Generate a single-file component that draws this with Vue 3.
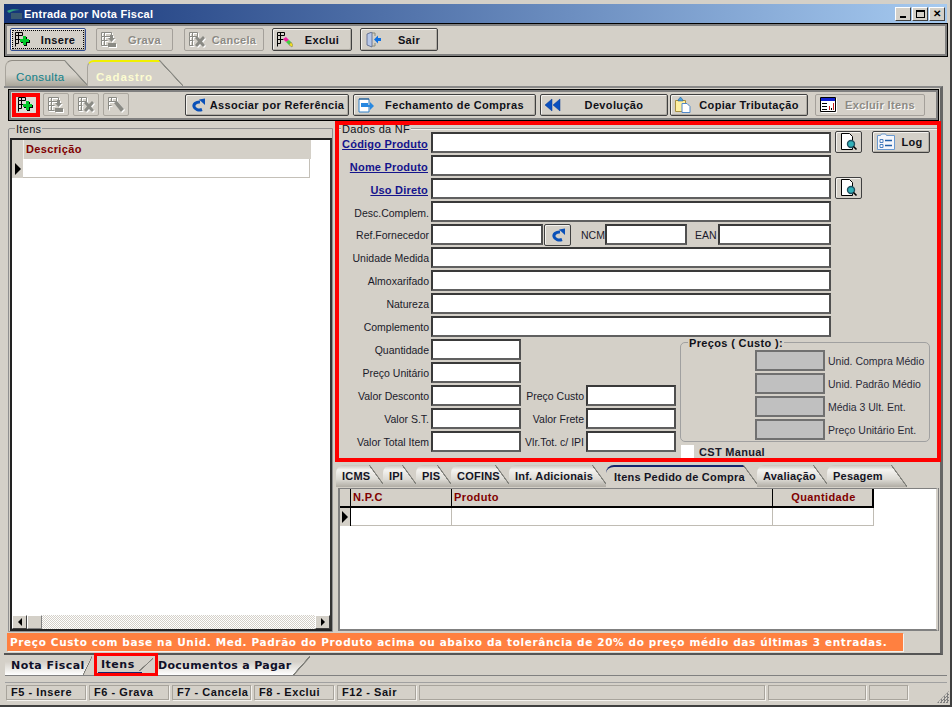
<template>
  <div class="window">
    <svg class="defs" width="0" height="0">
      <symbol id="rows" viewBox="0 0 16 16">
        <path d="M.5.5h7v3h-7zM.5 3.500v11M.5 7.500h6M3.500.5v7M.5 11.500h3M3.500 7.500v4" fill="none" stroke="currentColor" />
      </symbol>
      <symbol id="plus" viewBox="0 0 16 16">
        <path d="M9 5h3v3h3v3h-3v3H9v-3H6V8h3z" fill="#000" />
        <path d="M8 4h3v3h3v3h-3v3H8v-3H5V7h3z" fill="#00c828" />
      </symbol>
      <symbol id="save" viewBox="0 0 16 16">
        <path d="M.5.5h10v4H.5zM.5 4.500v9h6M.5 8.500h6M3.500.5v13" fill="none" stroke="currentColor" />
        <path d="M9 3h3v3h2l-3.500 4L7 6h2zM7 11h8v4H7z" fill="currentColor" />
      </symbol>
      <symbol id="cross" viewBox="0 0 16 16">
        <path d="M.5.5h8v4h-8zM.5 4.500v9h4M.5 8.500h4M3.500.5v13" fill="none" stroke="currentColor" />
        <path d="M6 6l2-2 3 3 3-3 2 2-3 3.500 3 3.500-2 2-3-3-3 3-2-2 3-3.500z" fill="currentColor" />
      </symbol>
      <symbol id="rubber" viewBox="0 0 16 16">
        <path d="M.5.5h8v4h-8zM.5 4.500v8M.5 8.500h3M3.500.5v4" fill="none" stroke="currentColor" />
        <path d="M6 6l3-2 7 8-3 3z" fill="currentColor" />
      </symbol>
      <symbol id="eraser" viewBox="0 0 16 16">
        <path d="M6 7l3-2 3 3-3 2z" fill="#f020a0" />
        <path d="M9 10l3-2 2 2-2 3z" fill="#40d040" />
        <path d="M12 13l2-3 2 3-1 2z" fill="#f0e020" stroke="#555" stroke-width=".4" />
      </symbol>
      <symbol id="door" viewBox="0 0 16 16">
        <path d="M2 2l5-2v15l-5-2z" fill="#b8c8e8" stroke="#506088" stroke-width=".8" />
        <path d="M7 1h3v3M10 11v3H7" fill="none" stroke="#8a8a7a" />
        <path d="M9 7.500L13 3.500v2.500h3v3h-3v2.500z" fill="#1070e0" />
      </symbol>
      <symbol id="redo" viewBox="0 0 16 16">
        <path d="M12 12.500A5.500 4 0 1 1 10 5" fill="none" stroke="#0a50b8" stroke-width="3" />
        <path d="M9 2.500l6-1v6.500z" fill="#0a50b8" />
      </symbol>
      <symbol id="note" viewBox="0 0 16 16">
        <path d="M1 2h10v13H1z" fill="#fff" stroke="#3080c8" />
        <path d="M2 1v2M4 1v2M6 1v2M8 1v2M10 1v2" stroke="#205080" />
        <path d="M3 6h7v2h2V5l4 4-4 4v-3H3z" fill="#2888e0" />
      </symbol>
      <symbol id="back" viewBox="0 0 16 16">
        <path d="M7 2v12L0 8zM15 2v12L8 8z" fill="#0a50c0" stroke="#083890" stroke-width=".5" />
      </symbol>
      <symbol id="clip" viewBox="0 0 16 16">
        <path d="M.5 3.500h10v11H.5z" fill="#fff0a0" stroke="#a89040" />
        <path d="M3 3l2.500-3L8 3v1H3z" fill="#48a0e0" stroke="#205080" stroke-width=".5" />
        <path d="M7 6.500h5l3 3v6H7z" fill="#fff" stroke="#5088c8" />
      </symbol>
      <symbol id="win" viewBox="0 0 16 16">
        <path d="M.5.5h15v14H.5z" fill="#fff" stroke="#000" />
        <path d="M1 1h14v3H1z" fill="#1020d0" />
        <path d="M2 6h5v1H2zM2 9h5v1H2zM2 12h5v1H2z" fill="#000" />
        <path d="M9 9h1v4H9zM13 6h1v7h-1z" fill="#d02020" />
        <path d="M11 11h1v2h-1z" fill="#000" />
      </symbol>
      <symbol id="lookup" viewBox="0 0 18 18">
        <path d="M1.500.5h8l3 3v13h-11z" fill="#fff" stroke="#000" />
        <circle cx="11" cy="11" r="3.500" fill="#30b0b8" stroke="#205060" stroke-width="1.400" />
        <path d="M13.500 13.500l3 3" stroke="#000" stroke-width="1.600" />
      </symbol>
      <symbol id="loglist" viewBox="0 0 18 18">
        <path d="M.5 2.500h3l1-1.500h4l1 1.500h8v14H.5z" fill="#f4f6fb" stroke="#6a9ad0" />
        <path d="M3 6.500h3v3H3zM3 11.500h3v3H3z" fill="none" stroke="#4a80c0" />
        <path d="M8 7.500h7M8 12.500h7" stroke="#2060a8" stroke-width="1.400" />
      </symbol>
    </svg>

    <header class="title-bar">
      <svg class="app-logo" width="17" height="12" viewBox="0 0 17 12">
        <path d="M1 3c3-2 9-2 13-1-5 0-8 1-11 3z" fill="#30a080" />
        <path d="M5 5h11v6H5z" fill="#3a5a70" />
      </svg>
      <span class="title-text">Entrada por Nota Fiscal</span>
      <div class="win-btns">
        <button class="win-btn"><i class="min"></i></button>
        <button class="win-btn"><i class="max"></i></button>
        <button class="win-btn close">✕</button>
      </div>
    </header>

    <div class="main-toolbar">
      <button v-for="b in mainButtons" :key="b.label" class="btn" :class="{ off: b.off, focus: b.focus }" :style="{ width: b.w + 'px', marginRight: b.gap + 'px' }">
        <svg class="ico"><use href="#rows" v-if="b.base" /><use :href="b.icon" /></svg>
        <span>{{ b.label }}</span>
      </button>
    </div>

    <div class="page-tabs">
      <div class="page-tab consulta">Consulta</div>
      <div class="page-tab cadastro">Cadastro</div>
    </div>

    <section class="panel">
      <div class="sub-toolbar">
        <div class="red-btn">
          <button class="sq plain"><svg class="ico"><use href="#rows" /><use href="#plus" /></svg></button>
        </div>
        <button class="sq off"><svg class="ico"><use href="#save" /></svg></button>
        <button class="sq off"><svg class="ico"><use href="#cross" /></svg></button>
        <button class="sq off"><svg class="ico"><use href="#rubber" /></svg></button>
        <button v-for="b in subButtons" :key="b.label" class="btn sub" :class="{ off: b.off }" :style="{ width: b.w + 'px', marginLeft: b.gap + 'px' }">
          <svg class="ico"><use :href="b.icon" /></svg>
          <span>{{ b.label }}</span>
        </button>
      </div>

      <div class="body">
        <div class="left-group">
          <span class="legend">Itens</span>
          <div class="left-grid">
            <div class="grid-head">
              <div class="ind-head"></div>
              <div class="desc-head">Descrição</div>
            </div>
            <div class="grid-row">
              <div class="ind"><i class="arrow"></i></div>
              <div class="desc-cell"></div>
            </div>
            <div class="spacer"></div>
            <div class="hscroll">
              <button class="sb-btn"><i class="tri-l"></i></button>
              <div class="sb-thumb"></div>
              <div class="sb-track"></div>
              <button class="sb-btn"><i class="tri-r"></i></button>
            </div>
          </div>
        </div>

        <div class="right-col">
          <div class="red-frame">
            <span class="legend nf">Dados da NF</span>
            <div class="row">
              <a class="lbl link">Código Produto</a><input class="fld wide" />
              <button class="sq look"><svg class="ico18"><use href="#lookup" /></svg></button>
              <button class="btn log"><svg class="ico18"><use href="#loglist" /></svg><span>Log</span></button>
            </div>
            <div class="row"><a class="lbl link">Nome Produto</a><input class="fld wide" /></div>
            <div class="row">
              <a class="lbl link">Uso Direto</a><input class="fld wide" />
              <button class="sq look"><svg class="ico18"><use href="#lookup" /></svg></button>
            </div>
            <div class="row"><label class="lbl low">Desc.Complem.</label><input class="fld wide" /></div>
            <div class="row">
              <label class="lbl">Ref.Fornecedor</label><input class="fld ref" />
              <button class="sq redo"><svg class="ico"><use href="#redo" /></svg></button>
              <label class="lbl-in ncm">NCM</label><input class="fld ncm-in" />
              <label class="lbl-in ean">EAN</label><input class="fld ean-in" />
            </div>
            <div class="row"><label class="lbl">Unidade Medida</label><input class="fld wide" /></div>
            <div class="row"><label class="lbl">Almoxarifado</label><input class="fld wide" /></div>
            <div class="row extra"><label class="lbl">Natureza</label><input class="fld wide" /></div>
            <div class="row"><label class="lbl">Complemento</label><input class="fld wide" /></div>

            <div class="lower">
              <div class="values">
                <div class="row"><label class="lbl">Quantidade</label><input class="fld num" /></div>
                <div class="row"><label class="lbl">Preço Unitário</label><input class="fld num" /></div>
                <div v-for="v in valueRows" :key="v[0]" class="row extra">
                  <label class="lbl">{{ v[0] }}</label><input class="fld num" />
                  <label class="lbl second">{{ v[1] }}</label><input class="fld num" />
                </div>
              </div>
              <div class="price-side">
                <div class="price-group">
                  <span class="legend price">Preços ( Custo ):</span>
                  <div v-for="p in priceRows" :key="p" class="price-row">
                    <input class="fld gray" disabled /><span>{{ p }}</span>
                  </div>
                </div>
                <div class="cst"><i class="check"></i><span>CST Manual</span></div>
              </div>
            </div>
          </div>

          <div class="inner-tabs">
            <div v-for="t in innerTabs" :key="t.label" class="inner-tab" :class="{ on: t.on }" :style="{ width: t.w + 'px' }">{{ t.label }}</div>
          </div>

          <div class="items-grid">
            <div class="items-head">
              <div class="c-ind"></div>
              <div class="c-npc">N.P.C</div>
              <div class="c-prod">Produto</div>
              <div class="c-qty">Quantidade</div>
            </div>
            <div class="items-row">
              <div class="c-ind cell-ind"><i class="arrow"></i></div>
              <div class="c-npc"></div>
              <div class="c-prod"></div>
              <div class="c-qty"></div>
            </div>
          </div>
        </div>
      </div>

      <div class="warning">Preço Custo com base na Unid. Med. Padrão do Produto acima ou abaixo da tolerância de 20% do preço médio das últimas 3 entradas.</div>
    </section>

    <nav class="bottom-tabs">
      <div class="bot-tab nota">Nota Fiscal</div>
      <div class="bot-tab itens">Itens</div>
      <div class="bot-tab docs">Documentos a Pagar</div>
    </nav>

    <footer class="status">
      <div v-for="(s, i) in statusCells" :key="i" class="st-cell" :style="{ width: s.w + 'px' }">{{ s.t }}</div>
      <div class="grip"></div>
    </footer>
  </div>
</template>

<script setup>
const mainButtons = [
  { label: 'Insere', icon: '#plus', base: true, w: 76, gap: 10, focus: true },
  { label: 'Grava', icon: '#save', w: 77, gap: 11, off: true },
  { label: 'Cancela', icon: '#cross', w: 80, gap: 8, off: true },
  { label: 'Exclui', icon: '#eraser', base: true, w: 80, gap: 8 },
  { label: 'Sair', icon: '#door', w: 78, gap: 0 }
]
const subButtons = [
  { label: 'Associar por Referência', icon: '#redo', w: 164, gap: 52 },
  { label: 'Fechamento de Compras', icon: '#note', w: 183, gap: 4 },
  { label: 'Devolução', icon: '#back', w: 128, gap: 4 },
  { label: 'Copiar Tributação', icon: '#clip', w: 138, gap: 2 },
  { label: 'Excluir Itens', icon: '#win', w: 110, gap: 7, off: true }
]
const valueRows = [
  ['Valor Desconto', 'Preço Custo'],
  ['Valor S.T.', 'Valor Frete'],
  ['Valor Total Item', 'Vlr.Tot. c/ IPI']
]
const priceRows = ['Unid. Compra Médio', 'Unid. Padrão Médio', 'Média 3 Ult. Ent.', 'Preço Unitário Ent.']
const innerTabs = [
  { label: 'ICMS', w: 49 },
  { label: 'IPI', w: 35 },
  { label: 'PIS', w: 37 },
  { label: 'COFINS', w: 60 },
  { label: 'Inf. Adicionais', w: 99 },
  { label: 'Itens Pedido de Compra', w: 153, on: true },
  { label: 'Avaliação', w: 72 },
  { label: 'Pesagem', w: 80 }
]
const statusCells = [
  { t: 'F5 - Insere', w: 80 },
  { t: 'F6 - Grava', w: 80 },
  { t: 'F7 - Cancela', w: 79 },
  { t: 'F8 - Exclui', w: 80 },
  { t: 'F12 - Sair', w: 79 },
  { t: '', w: 346 },
  { t: '', w: 98 },
  { t: '', w: 39 }
]
</script>

<style>
html, body { margin: 0; background: #d4d0c8; }
</style>

<style scoped>
.window { position: relative; width: 952px; height: 707px; box-sizing: border-box; overflow: hidden; background: #d4d0c8; border-right: 2px solid #404040; border-bottom: 2px solid #404040; padding: 4px 2px 0 4px; font-family: "Liberation Sans", Arial, sans-serif; font-size: 11px; color: #1a1a2a; }
.defs { position: absolute; }
button { font-family: inherit; padding: 0; }

.title-bar { height: 19px; display: flex; align-items: center; margin-right: 1px; background: linear-gradient(90deg, #153478, #a6caf0); color: #fff; }
.app-logo { margin: 0 1px 0 2px; }
.title-text { font-weight: bold; font-size: 11px; letter-spacing: .25px; }
.win-btns { margin-left: auto; display: flex; gap: 1px; margin-right: 2px; }
.win-btn { width: 16px; height: 14px; background: #d4d0c8; border: 1px solid; border-color: #fff #404040 #404040 #fff; font-size: 10px; line-height: 11px; display: flex; align-items: center; justify-content: center; color: #000; }
.win-btn.close { font-weight: bold; }
.min { width: 6px; height: 2px; background: #000; margin-top: 7px; }
.max { width: 9px; height: 8px; border: 1px solid #000; border-top-width: 2px; box-sizing: border-box; }

.main-toolbar { height: 34px; box-sizing: border-box; display: flex; align-items: flex-start; padding: 4px 0 0 5px; border: 1px solid #000; box-shadow: inset 2px 2px 0 #808080, inset -2px -2px 0 #808080; }

.btn { height: 23px; box-sizing: border-box; flex: none; display: flex; align-items: center; padding-left: 4px; background: #d4d0c8; border: 1px solid #404040; border-radius: 2px; font-weight: bold; font-size: 11px; letter-spacing: .35px; color: #101018; box-shadow: inset 1px 1px 0 #f4f2ee, inset -1px -1px 0 #b0aca4; }
.btn span { flex: 1; text-align: center; }
.btn.off { border-color: #a4a09a; color: #8c8a84; text-shadow: 1px 1px 0 #fff; box-shadow: none; }
.btn.focus { border-color: #304c90; outline: 1px dotted #000; outline-offset: -3px; }
.ico { width: 16px; height: 16px; flex: none; display: block; color: #000; }
.ico18 { width: 18px; height: 18px; flex: none; display: block; color: #000; }
.off .ico { color: #8a8a84; filter: drop-shadow(1px 1px 0 #fff); }

.page-tabs { display: flex; height: 26px; margin-top: 3px; padding-left: 1px; }
.page-tab { position: relative; box-sizing: border-box; height: 26px; padding-top: 10px; border-top-left-radius: 7px; border-top: 1px solid #908c84; border-left: 1px solid #a8a49c; }
.page-tab::after { content: ""; position: absolute; right: 0; top: -1px; bottom: 0; width: 24px; background: linear-gradient(to top right, transparent 48%, #8a8a84 49%, #8a8a84 51%, #d4d0c8 53%); }
.consulta { width: 83px; margin-right: -1px; padding-left: 10px; font-size: 11.5px; letter-spacing: .4px; color: #108088; background: linear-gradient(#d4d0c8 55%, #aaa69a); }
.cadastro { width: 96px; padding-left: 8px; font-weight: bold; font-size: 11.5px; letter-spacing: .9px; color: #fcfcd0; background: #d4d0c8; border-top: 2px solid #f0f000; padding-top: 9px; }
.cadastro::after { top: -2px; }

.panel { width: 939px; height: 569px; box-sizing: border-box; padding: 1px 1px 0 3px; border-top: 2px solid #888; border-right: 3px solid #666; border-bottom: 2px solid #555; }
.sub-toolbar { height: 32px; box-sizing: border-box; display: flex; align-items: flex-start; padding: 3px 0 0 3px; margin-left: 1px; border: 1px solid #000; box-shadow: inset 2px 2px 0 #808080, inset -2px -2px 0 #808080; }
.red-btn { box-sizing: border-box; width: 28px; height: 24px; border: 4px solid #f00; margin-right: 3px; flex: none; }
.sq { box-sizing: border-box; flex: none; display: flex; align-items: center; justify-content: center; background: #d4d0c8; border: 1px solid #404040; border-radius: 2px; box-shadow: inset 1px 1px 0 #f4f2ee; }
.sq.plain { width: 20px; height: 16px; border: 0; box-shadow: none; background: #dedcd6; }
.sq.off { width: 26px; height: 23px; margin-right: 4px; border-color: #aaa69e; box-shadow: none; }
.btn.sub { height: 22px; margin-top: 1px; }

.body { display: flex; height: 512px; padding-left: 1px; }
.left-group { position: relative; box-sizing: border-box; width: 325px; height: 504px; margin-top: 7px; border: 1px solid #909090; padding: 9px 0 0 1px; border-top-left-radius: 2px; flex: none; }
.legend { position: absolute; top: -5px; left: 6px; padding: 0 1px; background: #d4d0c8; font-size: 11px; letter-spacing: .3px; color: #101018; line-height: 11px; }
.left-grid { box-sizing: border-box; display: flex; flex-direction: column; width: 322px; height: 493px; border: 2px solid #222; border-right-color: #333; background: #fff; }
.grid-head { display: flex; height: 19px; flex: none; }
.ind-head { width: 11px; background: #d4d0c8; border-right: 1px solid #f0eee8; }
.desc-head { width: 287px; background: #d4d0c8; color: #800000; font-size: 11px; letter-spacing: .35px; padding-left: 2px; box-sizing: border-box; line-height: 19px; font-weight: bold; }
.grid-row { display: flex; height: 19px; flex: none; }
.ind { width: 11px; background: #d4d0c8; display: flex; align-items: center; justify-content: center; }
.arrow { width: 0; height: 0; border-left: 6px solid #000; border-top: 6px solid transparent; border-bottom: 6px solid transparent; }
.desc-cell { width: 287px; border-bottom: 1px solid #c4c0b8; border-right: 1px solid #c4c0b8; box-sizing: border-box; }
.spacer { flex: 1; }
.hscroll { display: flex; height: 14px; flex: none; }
.sb-btn { width: 15px; height: 14px; box-sizing: border-box; background: #d4d0c8; border: 1px solid; border-color: #fff #404040 #404040 #fff; display: flex; align-items: center; justify-content: center; }
.sb-thumb { width: 15px; background: #d4d0c8; border: 1px solid; border-color: #fff #808080 #808080 #fff; box-sizing: border-box; }
.sb-track { flex: 1; background: repeating-conic-gradient(#d4d0c8 0 25%, #fff 0 50%) 0 0 / 2px 2px; }
.tri-l { border-right: 4px solid #000; border-top: 4px solid transparent; border-bottom: 4px solid transparent; }
.tri-r { border-left: 4px solid #000; border-top: 4px solid transparent; border-bottom: 4px solid transparent; }

.right-col { flex: none; width: 606px; margin-left: 2px; }
.red-frame { position: relative; box-sizing: border-box; width: 606px; height: 341px; border: 4px solid #f00; padding-top: 7px; overflow: hidden; }
.red-frame::before { content: ""; position: absolute; left: 0; right: 0; top: 4px; height: 1px; background: #f4f2ee; box-shadow: 0 -1px 0 #999; }
.legend.nf { top: -1px; left: 2px; z-index: 1; }
.row { display: flex; align-items: flex-start; height: 21px; margin-bottom: 2px; }
.row.extra { margin-top: 1px; }
.lbl { width: 92px; flex: none; box-sizing: border-box; text-align: right; padding-right: 2px; line-height: 22px; font-size: 10.5px; white-space: nowrap; color: #1a1a2a; }
.lbl.low { line-height: 24px; }
.link { font-weight: bold; font-size: 11px; line-height: 24px; color: #14148c; text-decoration: underline; padding-right: 3px; letter-spacing: .2px; }
.fld { box-sizing: border-box; height: 21px; padding: 0; flex: none; background: #fff; border: 2px solid #3a3a3a; border-right-color: #505050; border-bottom-color: #606060; border-radius: 0; outline: none; }
.wide { width: 400px; }
.ref { width: 112px; }
.sq.look { width: 27px; height: 22px; margin: -1px 0 0 4px; }
.btn.log { width: 58px; height: 22px; margin: -1px 0 0 10px; padding-left: 4px; }
.sq.redo { width: 27px; height: 22px; margin-left: 1px; }
.lbl-in { line-height: 22px; flex: none; font-size: 10.5px; color: #1a1a2a; }
.ncm { margin-left: 10px; width: 24px; }
.ncm-in { width: 82px; }
.ean { margin-left: 8px; width: 23px; }
.ean-in { width: 113px; }
.lower { display: flex; }
.values { width: 337px; flex: none; }
.num { width: 90px; }
.lbl.second { width: 65px; }
.price-side { margin: 3px 0 0 4px; }
.price-group { position: relative; box-sizing: border-box; width: 250px; height: 100px; border: 1px solid #a0a0a0; border-radius: 5px; padding: 7px 0 0 74px; }
.legend.price { left: 7px; font-weight: bold; letter-spacing: .35px; top: -5px; }
.price-row { display: flex; align-items: center; height: 21px; margin-bottom: 2px; }
.gray { width: 70px; background: #c0c0c0; border-color: #707070; }
.price-row span { margin-left: 3px; font-size: 10.5px; white-space: nowrap; color: #2a2a38; }
.cst { display: flex; align-items: center; margin: 3px 0 0 1px; font-weight: bold; letter-spacing: .3px; }
.check { width: 13px; height: 13px; background: #fff; margin-right: 5px; }

.inner-tabs { display: flex; height: 22px; margin-top: 3px; padding-left: 1px; margin-bottom: 1px; }
.inner-tab { position: relative; box-sizing: border-box; height: 22px; margin-right: -2px; flex: none; text-indent: 6px; line-height: 23px; font-weight: bold; font-size: 11px; letter-spacing: .22px; color: #141424; border-top-left-radius: 8px; background: linear-gradient(#c8c4bc, #f4f3f0 22%, #dcdad4 65%, #b0aca4); white-space: nowrap; }
.inner-tab::after { content: ""; position: absolute; right: 0; top: 0; bottom: 0; width: 16px; background: linear-gradient(to top right, transparent 48%, #80807a 49%, #80807a 52%, #d4d0c8 54%); }
.inner-tab.on { background: #d4d0c8; border-top: 2px solid #14246c; line-height: 20px; text-indent: 8px; }
.inner-tab.on::after { top: -2px; }

.items-grid { box-sizing: border-box; width: 600px; height: 143px; margin-left: 3px; background: #fff; border: 2px solid #808080; border-top-width: 1px; border-right-color: #d4d0c8; box-shadow: 1px 0 0 #808080; }
.items-head { display: flex; height: 19px; }
.items-head > div { box-sizing: border-box; background: #d4d0c8; height: 19px; line-height: 17px; border-bottom: 2px solid #000; border-right: 1px solid #000; color: #800000; font-weight: bold; letter-spacing: .4px; padding-left: 2px; }
.c-ind { width: 11px; flex: none; box-sizing: border-box; }
.c-npc { width: 101px; flex: none; box-sizing: border-box; }
.c-prod { width: 321px; flex: none; box-sizing: border-box; }
.c-qty { width: 101px; flex: none; box-sizing: border-box; }
.items-head .c-qty { text-align: center; border-right-width: 2px; }
.items-row { display: flex; height: 18px; }
.items-row > div { border-bottom: 1px solid #c0bcb4; border-right: 1px solid #c0bcb4; box-sizing: border-box; }
.items-row .cell-ind { background: #d4d0c8; display: flex; align-items: center; justify-content: center; border-right: 1px solid #000; border-bottom: 0; }

.warning { width: 896px; height: 18px; box-sizing: border-box; background: #ff8040; color: #fff; font-family: "DejaVu Sans", Verdana, sans-serif; font-weight: bold; font-size: 10.5px; line-height: 18px; padding-left: 3px; letter-spacing: .62px; white-space: nowrap; box-shadow: 1px 1px 0 #f4f2ee; }

.bottom-tabs { display: flex; height: 21px; box-sizing: border-box; margin-left: 1px; border-bottom: 1px solid #808080; width: 942px; align-items: flex-start; }
.bot-tab { position: relative; box-sizing: border-box; height: 19px; margin-top: 1px; line-height: 19px; font-family: "DejaVu Sans", Verdana, sans-serif; font-weight: bold; font-size: 11px; letter-spacing: .3px; color: #101028; background: linear-gradient(#d4d0c8 30%, #fff); white-space: nowrap; }
.bot-tab::after { content: ""; position: absolute; right: 0; top: 0; bottom: 0; width: 17px; background: linear-gradient(to bottom right, transparent 48%, #80807a 49%, #80807a 53%, #d4d0c8 55%); }
.nota { width: 87px; padding-left: 6px; margin-right: 2px; letter-spacing: .45px; }
.nota::after { width: 9px; }
.itens { width: 64px; height: 23px; margin-top: -2px; border: 3px solid #f00; padding-left: 4px; line-height: 17px; background: #d4d0c8; letter-spacing: .5px; }
.itens::after { width: 14px; right: 2px; top: 2px; bottom: 2px; }
.itens::before { content: ""; position: absolute; left: 1px; bottom: 0; width: 44px; height: 1px; background: #14246c; }
.docs { width: 152px; }

.status { display: flex; gap: 3px; height: 18px; box-sizing: border-box; margin: 6px 0 0 1px; padding: 2px 0 0 1px; width: 942px; border-top: 1px solid #a0a0a0; }
.st-cell { box-sizing: border-box; height: 15px; border: 1px solid #a8a49c; box-shadow: 1px 1px 0 #f4f2ee; padding-left: 4px; line-height: 13px; font-weight: bold; font-size: 11px; letter-spacing: .55px; color: #101018; white-space: nowrap; }
.grip { position: absolute; right: 1px; bottom: 2px; width: 12px; height: 12px; background: repeating-conic-gradient(#808080 0 25%, transparent 0 50%) 0 0 / 3px 3px; clip-path: polygon(100% 0, 100% 100%, 0 100%); }
</style>
